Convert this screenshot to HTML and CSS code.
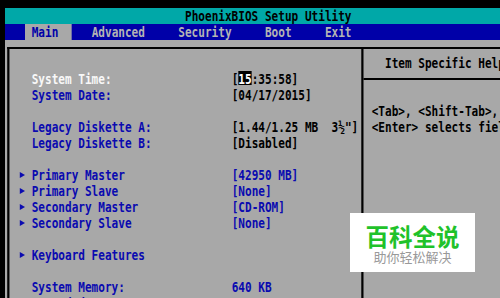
FILE: index.html
```html
<!DOCTYPE html>
<html lang="en">
<head>
    <meta charset="UTF-8">
    <title>PhoenixBIOS Setup Utility</title>
    <link rel="stylesheet" href="styles.css">
</head>
<body>
    <div class="screen">
        <div class="title">PhoenixBIOS Setup Utility</div>
        <div class="menu">
            <span class="tab active">Main</span>
            <span class="tab">Advanced</span>
            <span class="tab">Security</span>
            <span class="tab">Boot</span>
            <span class="tab">Exit</span>
        </div>
        <div class="main">
            <div class="frame">
                <div class="left">
                    <div class="row selected"><span class="mark"></span><span class="label">System Time:</span><span class="value dark">[<span class="cursor">15</span>:35:58]</span></div>
                    <div class="row"><span class="mark"></span><span class="label">System Date:</span><span class="value dark">[04/17/2015]</span></div>
                    <div class="row"></div>
                    <div class="row"><span class="mark"></span><span class="label">Legacy Diskette A:</span><span class="value dark">[1.44/1.25 MB  3½"]</span></div>
                    <div class="row"><span class="mark"></span><span class="label">Legacy Diskette B:</span><span class="value dark">[Disabled]</span></div>
                    <div class="row"></div>
                    <div class="row sub"><span class="mark"></span><span class="label">Primary Master</span><span class="value">[42950 MB]</span></div>
                    <div class="row sub"><span class="mark"></span><span class="label">Primary Slave</span><span class="value">[None]</span></div>
                    <div class="row sub"><span class="mark"></span><span class="label">Secondary Master</span><span class="value">[CD-ROM]</span></div>
                    <div class="row sub"><span class="mark"></span><span class="label">Secondary Slave</span><span class="value">[None]</span></div>
                    <div class="row"></div>
                    <div class="row sub"><span class="mark"></span><span class="label">Keyboard Features</span></div>
                    <div class="row"></div>
                    <div class="row"><span class="mark"></span><span class="label">System Memory:</span><span class="value">640 KB</span></div>
                    <div class="row"><span class="mark"></span><span class="label">Extended Memory:</span><span class="value">1047552 KB</span></div>
                </div>
                <div class="right">
                    <div class="help-title">Item Specific Help</div>
                    <div class="help-rule"></div>
                    <div class="help-text">&lt;Tab&gt;, &lt;Shift-Tab&gt;, or
&lt;Enter&gt; selects field.</div>
                </div>
            </div>
        </div>
    </div>

    <!-- 右下の透かし -->
    <div class="badge">
        <div class="badge-title">百科全说</div>
        <div class="badge-sub">助你轻松解决</div>
    </div>
</body>
</html>
```

FILE: styles.css
```css
body {
    margin: 0;
    background-color: #000;
    height: 298px;
    overflow: hidden;
    position: relative;
    font-family: "DejaVu Sans Mono", "Liberation Mono", monospace;
    font-size: 14.95px;
    font-weight: bold;
    line-height: 16px;
}
/* 720x400 text screen squeezed to 4:3 */
.screen {
    width: 720px;
    margin: 8px 0 0 5.33px;
    transform: scaleX(0.7407);
    transform-origin: 0 0;
}
.title {
    height: 16px;
    background-color: #00a8a8;
    color: #000;
    padding-left: 243px;
    white-space: pre;
}
.menu {
    height: 16px;
    background-color: #0000a8;
    color: #b4b4b4;
    padding-left: 27px;
    display: flex;
}
.tab {
    padding: 0 18px 0 9px;
}
.tab + .tab {
    margin-left: 18px;
}
.tab.active {
    background-color: #a8a8a8;
    color: #0000a8;
}
.main {
    background-color: #a8a8a8;
    height: 280px;
    padding-top: 7px;
}
.frame {
    margin: 0 3px;
    height: 270px;
    border-top: 2px solid #000;
    border-left: 3px solid #000;
    border-right: 3px solid #000;
    display: flex;
}
.left {
    box-sizing: border-box;
    width: 478px;
    flex-shrink: 0;
    padding: 22px 0 0 12px;
    border-right: 3px solid #000;
}
.right {
    flex: 1;
    padding-top: 6px;
    color: #000;
}
.help-title {
    height: 16px;
    padding-left: 29px;
}
.help-rule {
    height: 2px;
    margin-top: 7px;
    background-color: #000;
}
.help-text {
    margin-top: 23px;
    padding-left: 11px;
    white-space: pre;
}
.row {
    display: flex;
    height: 16px;
    color: #0a0ab0;
    white-space: pre;
}
.mark {
    width: 18px;
    flex-shrink: 0;
    display: flex;
    align-items: center;
}
.row.sub .mark::before {
    content: "";
    margin-left: 2px;
    border-left: 7px solid #0a0ab0;
    border-top: 3px solid transparent;
    border-bottom: 3px solid transparent;
}
.label {
    width: 270px;
    flex-shrink: 0;
}
.row.selected .label {
    color: #f8f8f8;
}
.value.dark {
    color: #000;
}
.cursor {
    display: inline-block;
    height: 14px;
    vertical-align: top;
    background-color: #000;
    color: #fff;
}
.badge {
    position: absolute;
    left: 350px;
    top: 213px;
    width: 125px;
    height: 59px;
    background-color: #fff;
    text-align: center;
    font-family: "Noto Sans CJK SC", sans-serif;
    font-weight: normal;
}
.badge-title {
    padding-top: 10px;
    font-size: 23.5px;
    line-height: 26px;
    font-weight: bold;
    color: #1fc22a;
}
.badge-sub {
    font-size: 13px;
    line-height: 16px;
    color: #999;
}
```
